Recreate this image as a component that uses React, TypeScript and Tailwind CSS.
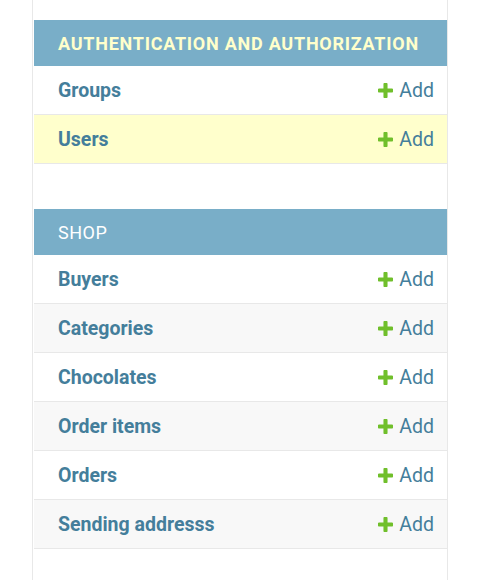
import React from "react";

const PlusIcon = () => (
  <svg width="15" height="15" viewBox="192 192 1408 1408" className="shrink-0 mb-[2px]">
    <path
      fill="#70bf2b"
      d="M1600 796v192q0 40-28 68t-68 28h-416v416q0 40-28 68t-68 28h-192q-40 0-68-28t-28-68v-416h-416q-40 0-68-28t-28-68v-192q0-40 28-68t68-28h416v-416q0-40 28-68t68-28h192q40 0 68 28t28 68v416h416q40 0 68 28t28 68z"
    />
  </svg>
);

type Row = { name: string; bg: string };

const Module = ({
  title,
  current,
  rows,
}: {
  title: string;
  current?: boolean;
  rows: Row[];
}) => (
  <div className="flex flex-col">
    <div className="h-[46px] bg-[#79aec8] flex items-center pl-[24px]">
      <span
        className={
          current
            ? "text-[18px] font-bold tracking-[0.75px] text-[#ffffcc] uppercase"
            : "text-[18px] font-normal tracking-[0.5px] text-[#ffffff] uppercase"
        }
      >
        {title}
      </span>
    </div>
    {rows.map((r) => (
      <div
        key={r.name}
        className={`h-[49px] pt-[2px] border-b border-[#e8e8e8] flex items-center justify-between pl-[24px] pr-[13px] ${r.bg}`}
      >
        <span className="text-[19.5px] font-bold text-[#447e9b] leading-none">{r.name}</span>
        <span className="flex items-center gap-[6px] text-[19.5px] text-[#447e9b] leading-none">
          <PlusIcon />
          Add
        </span>
      </div>
    ))}
  </div>
);

export default function App() {
  return (
    <div
      className="w-[488px] h-[580px] bg-white overflow-hidden"
      style={{ fontFamily: "Roboto, 'Liberation Sans', sans-serif" }}
    >
      <div className="ml-[32px] w-[416px] h-full border-l border-r border-[#e8e8e8] pl-[1px] pt-[20px] flex flex-col gap-[45px]">
        <Module
          title="Authentication and Authorization"
          current
          rows={[
            { name: "Groups", bg: "bg-white" },
            { name: "Users", bg: "bg-[#ffffcc]" },
          ]}
        />
        <Module
          title="Shop"
          rows={[
            { name: "Buyers", bg: "bg-white" },
            { name: "Categories", bg: "bg-[#f8f8f8]" },
            { name: "Chocolates", bg: "bg-white" },
            { name: "Order items", bg: "bg-[#f8f8f8]" },
            { name: "Orders", bg: "bg-white" },
            { name: "Sending addresss", bg: "bg-[#f8f8f8]" },
          ]}
        />
      </div>
    </div>
  );
}
